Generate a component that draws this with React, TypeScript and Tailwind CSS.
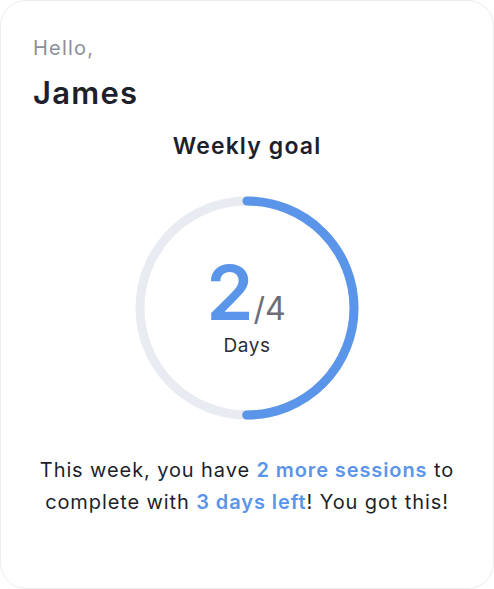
export default function App() {
  const r = 107;
  const c = 2 * Math.PI * r;
  const progress = 2 / 4;

  return (
    <div
      className="h-[589px] w-[494px] bg-white"
      style={{ fontFamily: "Inter, 'Open Sans', sans-serif" }}
    >
      <div className="flex h-full flex-col rounded-[26px] border border-[#ececec] px-[32px] pt-[33px]">
        <p className="text-[20px] leading-[28px] tracking-[0.06em] text-[#8d9099]">Hello,</p>
        <h1 className="mt-[13px] text-[31px] font-semibold leading-[36px] tracking-[0.04em] text-[#1d1f2b]">
          James
        </h1>

        <h2 className="mt-[20px] text-center text-[23px] font-semibold leading-[30px] tracking-[0.05em] text-[#1d1f2b]">
          Weekly goal
        </h2>

        {/* progress ring */}
        <div className="relative mx-auto mt-[35px] h-[224px] w-[224px]">
          <svg width="224" height="224" viewBox="0 0 224 224">
            <circle cx="112" cy="112" r={r} fill="none" stroke="#e8ebf1" strokeWidth="9" />
            <circle
              cx="112"
              cy="112"
              r={r}
              fill="none"
              stroke="#5b95e9"
              strokeWidth="9"
              strokeLinecap="round"
              strokeDasharray={`${c * progress} ${c}`}
              transform="rotate(-90 112 112)"
            />
          </svg>
          <div className="absolute inset-0 flex flex-col items-center justify-center">
            <div className="flex items-end pr-[2px]">
              <span className="text-[76px] font-semibold leading-[64px] text-[#5b95e9]">2</span>
              <span className="text-[32px] leading-[30px] text-[#6b6e78]">/4</span>
            </div>
            <span className="mt-[11px] text-[19px] leading-[22px] tracking-[0.03em] text-[#2b2d38]">
              Days
            </span>
          </div>
        </div>

        <p className="mt-[34px] text-center text-[20px] leading-[32px] tracking-[0.045em] text-[#1d1f2b]">
          This week, you have{" "}
          <span className="font-semibold text-[#5b95e9]">2 more sessions</span> to
          complete with <span className="font-semibold text-[#5b95e9]">3 days left</span>! You
          got this!
        </p>
      </div>
    </div>
  );
}
